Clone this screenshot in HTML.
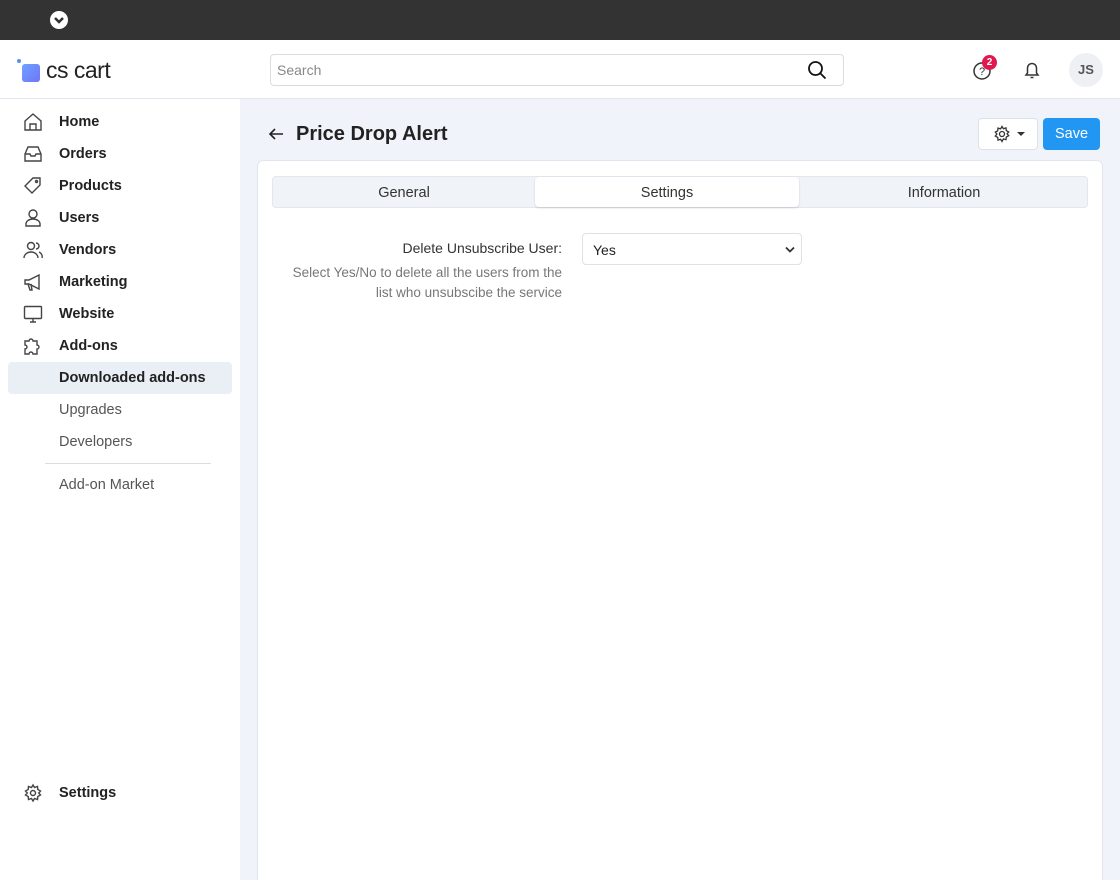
<!DOCTYPE html><html><head><style>
*{box-sizing:border-box;margin:0;padding:0}
html,body{width:1120px;height:880px;overflow:hidden}
body{font-family:"Liberation Sans",sans-serif;background:#f0f4fa;position:relative;color:#222}
.top{position:absolute;left:0;top:0;width:1120px;height:40px;background:#333}
.hdr{position:absolute;left:0;top:40px;width:1120px;height:59px;background:#fff;border-bottom:1px solid #e2e6ee}
.side{position:absolute;left:0;top:99px;width:240px;height:781px;background:#fff}
.nav{position:absolute;left:59px;font-size:14.5px;font-weight:bold;color:#222}
.sub{position:absolute;left:59px;font-size:14.5px;color:#555}
.ic{position:absolute;left:23px}
.card{position:absolute;left:257px;top:160px;width:846px;height:720px;background:#fff;border:1px solid #e2e6ee;border-bottom:none;border-radius:6px 6px 0 0}
</style></head><body>
<div class="top"><svg style="position:absolute;left:50px;top:11px" width="18" height="18"><circle cx="9" cy="9" r="9" fill="#fff"/><path d="M5 7l4 4 4-4" stroke="#333" stroke-width="2.5" fill="none"/></svg></div>
<div class="hdr">
<div style="position:absolute;left:17px;top:19px;width:4px;height:4px;border-radius:2px;background:#5b8cf6"></div>
<div style="position:absolute;left:22px;top:24px;width:18px;height:18px;border-radius:3px;background:linear-gradient(135deg,#6fa2ff,#6f74f6)"></div>
<div style="position:absolute;left:46px;top:17px;font-size:23px;color:#222;letter-spacing:-0.5px">cs cart</div>
<div style="position:absolute;left:270px;top:14px;width:574px;height:32px;border:1px solid #d8dce3;border-radius:4px;font-size:14px;color:#888;padding:7px 6px">Search</div>
<svg style="position:absolute;left:807px;top:20px" width="20" height="20"><circle cx="8.5" cy="8.5" r="6.5" stroke="#111" stroke-width="1.8" fill="none"/><path d="M13.5 13.5l5 5" stroke="#111" stroke-width="1.8"/></svg>
<svg style="position:absolute;left:972px;top:21px" width="20" height="20"><circle cx="10" cy="10" r="8" stroke="#333" stroke-width="1.5" fill="none"/><text x="10" y="14" font-size="11" text-anchor="middle" fill="#333" font-family="Liberation Sans">?</text></svg>
<div style="position:absolute;left:982px;top:15px;width:15px;height:15px;border-radius:8px;background:#e0184e;color:#fff;font-size:10px;font-weight:bold;text-align:center;line-height:15px">2</div>
<svg style="position:absolute;left:1022px;top:20px" width="20" height="20"><path d="M4 15h12l-1.5-2V8a4.5 4.5 0 0 0-9 0v5z" stroke="#333" stroke-width="1.5" fill="none"/><path d="M8.5 17.5h3" stroke="#333" stroke-width="1.5"/></svg>
<div style="position:absolute;left:1069px;top:13px;width:34px;height:34px;border-radius:17px;background:#eef0f4;color:#555;font-size:13px;font-weight:bold;text-align:center;line-height:34px">JS</div>
</div>
<div class="side">
<svg class="ic" style="top:13px" width="20" height="20" fill="none" stroke="#444" stroke-width="1.4"><path d="M2 9l8-7 8 7v9H2z"/><path d="M7 18v-6h6v6"/></svg>
<div class="nav" style="top:15px">Home</div>
<svg class="ic" style="top:45px" width="20" height="20" fill="none" stroke="#444" stroke-width="1.4"><path d="M2 10l3-7h10l3 7v7H2z"/><path d="M2 10h5l1 2h4l1-2h5"/></svg>
<div class="nav" style="top:47px">Orders</div>
<svg class="ic" style="top:77px" width="20" height="20" fill="none" stroke="#444" stroke-width="1.4"><path d="M2 10l8-8h7v7l-8 8z"/><circle cx="13.5" cy="5.5" r="1"/></svg>
<div class="nav" style="top:79px">Products</div>
<svg class="ic" style="top:109px" width="20" height="20" fill="none" stroke="#444" stroke-width="1.4"><circle cx="10" cy="6" r="4"/><path d="M3 18v-2a7 5 0 0 1 14 0v2z"/></svg>
<div class="nav" style="top:111px">Users</div>
<svg class="ic" style="top:141px" width="20" height="20" fill="none" stroke="#444" stroke-width="1.4"><circle cx="8" cy="6" r="3.5"/><path d="M1 18a7 6 0 0 1 14 0"/><path d="M13 3a3 3 0 0 1 0 6M16 12a5 5 0 0 1 3 6"/></svg>
<div class="nav" style="top:143px">Vendors</div>
<svg class="ic" style="top:173px" width="20" height="20" fill="none" stroke="#444" stroke-width="1.4"><path d="M2 8h4l10-5v14L6 12H2z"/><path d="M5 12l2 6h2l-1-6"/></svg>
<div class="nav" style="top:175px">Marketing</div>
<svg class="ic" style="top:205px" width="20" height="20" fill="none" stroke="#444" stroke-width="1.4"><rect x="1.5" y="2.5" width="17" height="12" rx="1"/><path d="M7 18h6M10 15v3"/></svg>
<div class="nav" style="top:207px">Website</div>
<svg class="ic" style="top:237px" width="20" height="20" fill="none" stroke="#444" stroke-width="1.4"><path d="M2 5h4a2 2 0 1 1 4 0h4v4a2 2 0 1 1 0 4v5h-4a2 2 0 1 0-4 0H2v-5a2 2 0 1 0 0-4z"/></svg>
<div class="nav" style="top:239px">Add-ons</div>
<div style="position:absolute;left:8px;top:263px;width:224px;height:32px;background:#eaeef5;border-radius:4px"></div>
<div class="nav" style="top:271px">Downloaded add-ons</div>
<div class="sub" style="top:303px">Upgrades</div>
<div class="sub" style="top:335px">Developers</div>
<div style="position:absolute;left:45px;top:364px;width:166px;border-top:1px solid #ddd"></div>
<div class="sub" style="top:378px">Add-on Market</div>
<svg class="ic" style="top:684px" width="20" height="20" fill="none" stroke="#444" stroke-width="1.4"><circle cx="10" cy="10" r="2.5"/><path d="M10 2l1.5 2.5 3-1 .3 3 2.7 1.5-1.8 2 1.8 2-2.7 1.5-.3 3-3-1L10 18l-1.5-2.5-3 1-.3-3L2.5 12l1.8-2-1.8-2 2.7-1.5.3-3 3 1z"/></svg>
<div class="nav" style="top:686px">Settings</div>
</div>
<svg style="position:absolute;left:267px;top:125px" width="18" height="18" fill="none" stroke="#222" stroke-width="1.6"><path d="M16 9H3M8 4L3 9l5 5"/></svg>
<div style="position:absolute;left:296px;top:123px;font-size:20px;font-weight:bold;color:#222">Price Drop Alert</div>
<div style="position:absolute;left:978px;top:118px;width:60px;height:32px;background:#fff;border:1px solid #dde1e8;border-radius:4px"><svg style="position:absolute;left:14px;top:6px" width="18" height="18" fill="none" stroke="#333" stroke-width="1.3"><circle cx="9" cy="9" r="2.5"/><path d="M9 1.5l1.4 2.2 2.6-.8.3 2.7 2.4 1.3-1.6 1.9 1.6 1.9-2.4 1.3-.3 2.7-2.6-.8L9 16.5l-1.4-2.2-2.6.8-.3-2.7-2.4-1.3L3.9 9 2.3 7.1l2.4-1.3.3-2.7 2.6.8z"/></svg><div style="position:absolute;left:38px;top:13px;border:4px solid transparent;border-top:4px solid #333"></div></div>
<div style="position:absolute;left:1043px;top:118px;width:57px;height:32px;background:#2196f3;border-radius:4px;color:#fff;font-size:14.5px;text-align:center;line-height:32px">Save</div>
<div class="card"></div>
<div style="position:absolute;left:272px;top:176px;width:816px;height:32px;background:#f0f3f7;border:1px solid #e2e6ee;border-radius:4px;font-size:14.5px;color:#333">
<div style="position:absolute;left:0;width:262px;text-align:center;top:8px">General</div>
<div style="position:absolute;left:262px;top:0;width:264px;height:30px;background:#fff;border-radius:4px;box-shadow:0 1px 2px rgba(0,0,0,.15);text-align:center;padding-top:8px">Settings</div>
<div style="position:absolute;left:526px;width:290px;text-align:center;top:8px">Information</div>
</div>
<div style="position:absolute;left:270px;top:240px;width:292px;text-align:right;font-size:14px;color:#333">Delete Unsubscribe User:</div>
<div style="position:absolute;left:270px;top:263px;width:292px;text-align:right;font-size:13.5px;line-height:20px;color:#777">Select Yes/No to delete all the users from the<br>list who unsubscibe the service</div>
<div style="position:absolute;left:582px;top:233px;width:220px;height:32px;border:1px solid #dde1e8;border-radius:4px;background:#fff;font-size:14px;padding:8px 10px;color:#222">Yes<svg style="position:absolute;right:6px;top:12px" width="10" height="8" fill="none" stroke="#333" stroke-width="1.8"><path d="M1 1.5l4 4 4-4"/></svg></div>
</body></html>
